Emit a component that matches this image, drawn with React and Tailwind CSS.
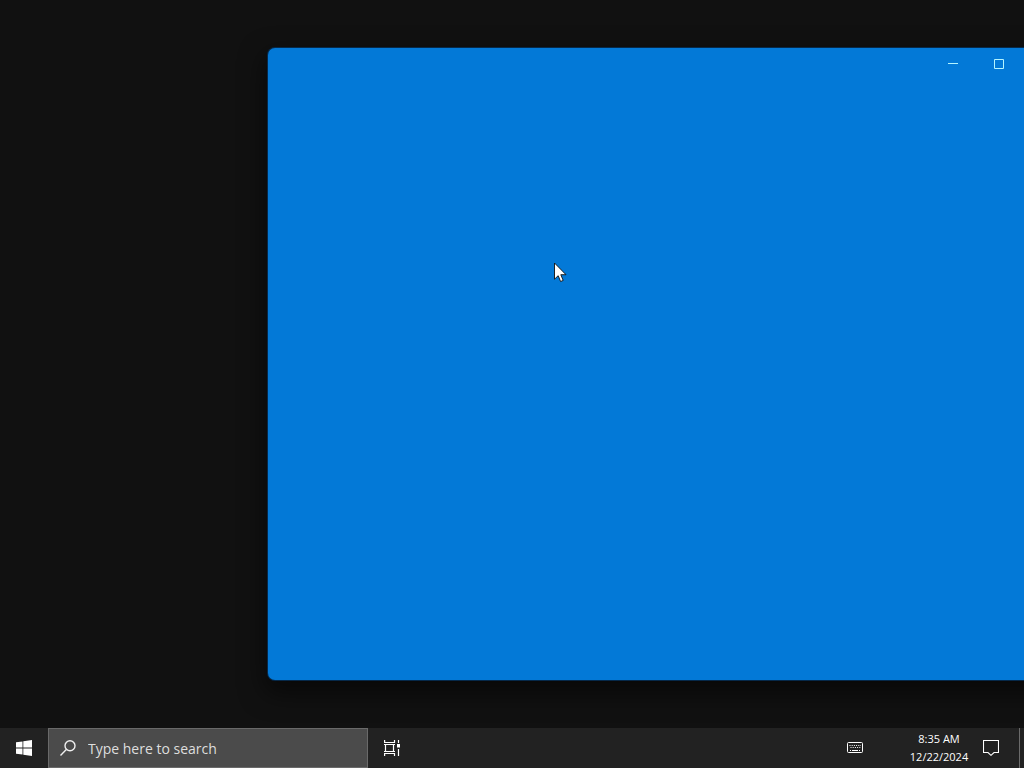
import React from "react";

const StartIcon = () => (
    <svg width="16" height="16" viewBox="0 0 16 16" fill="#fff" aria-hidden="true">
        <path d="M0 2.3 6.5 1.4V7.6H0zM7.3 1.3 16 0V7.6H7.3zM0 8.4H6.5V14.6L0 13.7zM7.3 8.4H16V16L7.3 14.7z" />
    </svg>
);

const SearchIcon = () => (
    <svg width="16" height="16" viewBox="0 0 16 16" fill="none" stroke="#f0f0f0" strokeWidth="1.4" aria-hidden="true">
        <circle cx="10" cy="5.8" r="5" />
        <path d="M6.3 9.4.5 15.4" />
    </svg>
);

const TaskViewIcon = () => (
    <svg width="16" height="16" viewBox="0 0 16 16" fill="none" stroke="#fff" strokeWidth="1.2" aria-hidden="true">
        <path d="M.6 0V2.5H10.5V0M.6 16V13.5H10.5V16M1.5 4.5H9.5V11.5H1.5zM0 4.5H11M0 11.5H11M14.5 0V3M14.5 9V16" />
        <path d="M13 4h3v3.5h-3z" fill="#fff" stroke="none" />
    </svg>
);

const KeyboardIcon = () => (
    <svg width="16" height="12" viewBox="0 0 16 12" fill="none" stroke="#fff" aria-hidden="true">
        <rect x=".5" y=".5" width="15" height="10" rx="1" />
        <path d="M2.5 3.5H14M3.5 5.5H13.5" strokeDasharray="1 1.2" />
        <path d="M3 8.5H4M5 8.5H11M12 8.5H13" />
    </svg>
);

const NotificationIcon = () => (
    <svg width="16" height="16" viewBox="0 0 16 16" fill="none" stroke="#fff" strokeWidth="1.1" aria-hidden="true">
        <path d="M.5.5H15.5V12.5H11L8 15.3 5 12.5H.5z" />
    </svg>
);

const Cursor = () => (
    <svg
        className="pointer-events-none absolute left-[554px] top-[262px]"
        width="13"
        height="21"
        viewBox="0 0 13 21"
        aria-hidden="true"
    >
        <path d="M.5 1V17.2L4.2 13.7 6.6 19.5 9.2 18.4 6.8 12.7H12z" fill="#fff" stroke="#111" strokeWidth=".9" />
    </svg>
);

const AppWindow = () => {
    const caption = "flex h-8 w-[46px] items-center justify-center hover:bg-white/10";

    return (
        <section
            aria-label="Window"
            className="absolute bottom-12 left-[268px] top-12 w-[800px] rounded-[7px] bg-[#0379d7] shadow-[0_0_0_1px_#06294a,0_10px_24px_4px_rgba(0,0,0,0.5)]"
        >
            <div className="flex justify-end">
                <button type="button" aria-label="Minimize" className={caption}>
                    <svg width="10" height="10" viewBox="0 0 10 10" stroke="#b4f4ff">
                        <path d="M0 4.5H10" />
                    </svg>
                </button>
                <button type="button" aria-label="Maximize" className={caption}>
                    <svg width="10" height="10" viewBox="0 0 10 10" fill="none" stroke="#b4f4ff">
                        <path d="M.5.5H9.5V9.5H.5z" />
                    </svg>
                </button>
                <button type="button" aria-label="Close" className={caption}>
                    <svg width="10" height="10" viewBox="0 0 10 10" stroke="#b4f4ff">
                        <path d="M0 0 10 10M10 0 0 10" />
                    </svg>
                </button>
            </div>
        </section>
    );
};

const Taskbar = () => {
    return (
        <footer className="flex h-10 items-stretch bg-[#222222] text-white">
            <button type="button" aria-label="Start" className="flex w-12 items-center justify-center">
                <StartIcon />
            </button>

            <label className="flex w-80 items-center gap-3 border border-[#6a6a6a] bg-[#4b4b4b] pl-[11px]">
                <SearchIcon />
                <input
                    type="text"
                    aria-label="Search"
                    placeholder="Type here to search"
                    className="min-w-0 flex-1 bg-transparent text-[14px] text-white placeholder-[#dedede] outline-none"
                />
            </label>

            <button type="button" aria-label="Task View" className="flex w-12 items-center justify-center">
                <TaskViewIcon />
            </button>

            <div className="ml-auto flex items-stretch">
                <button type="button" aria-label="Touch keyboard" className="flex w-10 items-center justify-center">
                    <KeyboardIcon />
                </button>
                <button type="button" className="ml-7 w-[72px] text-center text-[11px] leading-[18px]">
                    <time className="block">8:35 AM</time>
                    <time className="block">12/22/2024</time>
                </button>
                <button type="button" aria-label="Notifications" className="flex w-8 items-center justify-center">
                    <NotificationIcon />
                </button>
                <button type="button" aria-label="Show desktop" className="ml-3 w-[5px] border-l border-[#6b6b6b]" />
            </div>
        </footer>
    );
};

const App = () => {
    return (
        <div className="flex h-screen flex-col overflow-hidden bg-[#111111] font-['Open_Sans','Noto_Sans',sans-serif]">
            <main className="relative flex-1 overflow-hidden">
                <AppWindow />
                <Cursor />
            </main>
            <Taskbar />
        </div>
    );
};

export default App;
